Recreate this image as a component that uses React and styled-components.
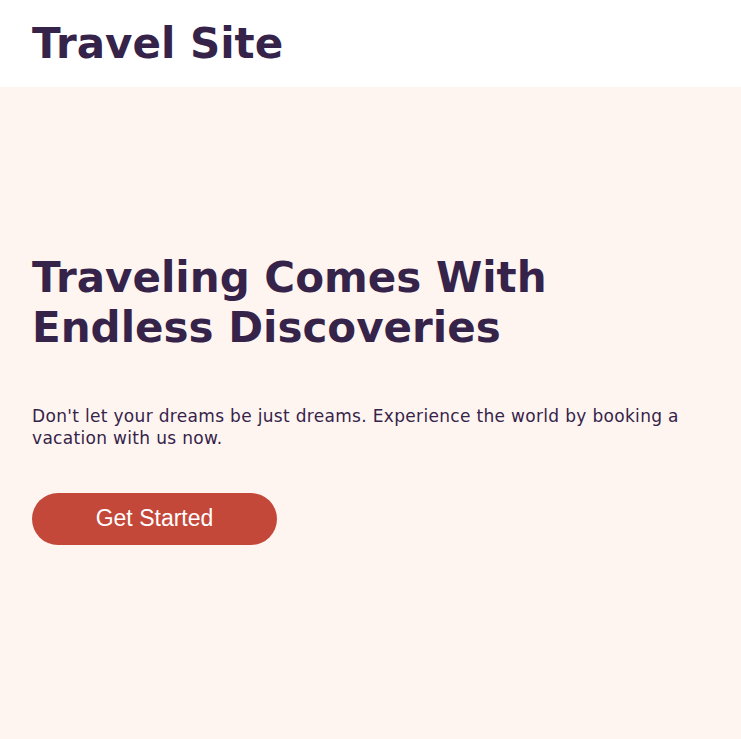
import React from "react";
import styled, { createGlobalStyle } from "styled-components";

const Global = createGlobalStyle`
  html, body { margin: 0; padding: 0; }
  body {
    background: #fff5f0;
    font-family: "DejaVu Sans", Verdana, sans-serif;
    color: #35234a;
  }
`;

const Header = styled.header`
  height: 87px;
  background: #ffffff;
  display: flex;
  align-items: center;
  padding: 0 32px;
`;

const Logo = styled.h1`
  margin: 0;
  font-size: 42px;
  font-weight: 700;
  color: #35234a;
`;

const Hero = styled.section`
  background: #fff5f0;
  min-height: 652px;
  padding: 166px 32px 0;
  box-sizing: border-box;
  display: flex;
  flex-direction: column;
  align-items: flex-start;
`;

const Title = styled.h2`
  margin: 0;
  font-size: 42px;
  line-height: 50px;
  font-weight: 700;
  max-width: 580px;
  color: #35234a;
`;

const Lead = styled.p`
  margin: 52px 0 0;
  font-size: 17px;
  line-height: 22px;
  letter-spacing: 0.32px;
  color: #35234a;
`;

const Button = styled.button`
  margin-top: 44px;
  width: 245px;
  height: 52px;
  padding: 0 0 2px;
  border: none;
  border-radius: 26px;
  background: #c4483a;
  color: #ffffff;
  font-family: "Liberation Sans", Arial, sans-serif;
  font-size: 23px;
  cursor: pointer;
`;

export default function App() {
  return (
    <>
      <Global />
      <Header>
        <Logo>Travel Site</Logo>
      </Header>
      <Hero>
        <Title>Traveling Comes With Endless Discoveries</Title>
        <Lead>
          Don't let your dreams be just dreams. Experience the world by booking a
          vacation with us now.
        </Lead>
        <Button>Get Started</Button>
      </Hero>
    </>
  );
}
